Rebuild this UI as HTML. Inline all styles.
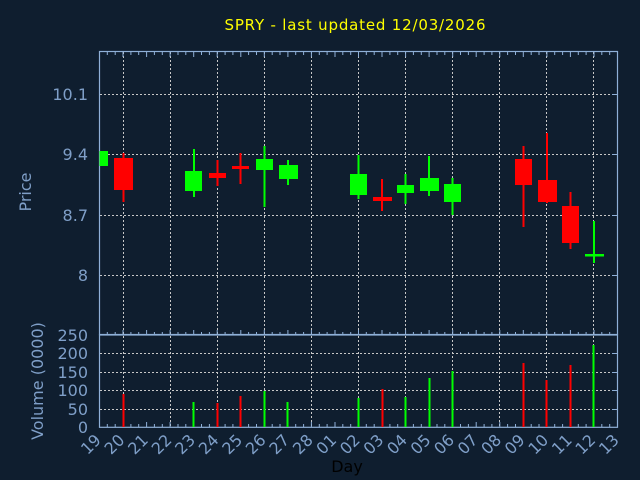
<!DOCTYPE html>
<html><head><meta charset="utf-8"><style>
html,body{margin:0;padding:0;background:#0f1e2f;}
svg{display:block;}
text{font-family:"DejaVu Sans","Liberation Sans",sans-serif;}
</style></head><body>
<svg id="s" width="640" height="480" viewBox="0 0 640 480" xmlns="http://www.w3.org/2000/svg">
<rect width="640" height="480" fill="#0f1e2f"/>
<text x="355" y="30" fill="#ffff00" font-size="15" text-anchor="middle" textLength="261">SPRY - last updated 12/03/2026</text>
<g stroke="#c8c8c8" stroke-width="1" stroke-dasharray="2,2" fill="none">
<path d="M100 94.5H617M100 154.5H617M100 215.5H617M100 275.5H617"/>
<path d="M100 353.5H617M100 372.5H617M100 390.5H617M100 409.5H617"/>
<path d="M123.5 52V427M170.5 52V427M217.5 52V427M264.5 52V427M311.5 52V427M358.5 52V427M405.5 52V427M452.5 52V427M499.5 52V427M546.5 52V427M593.5 52V427"/>
</g>
<g id="ticks" stroke="#8fb0d8" stroke-width="1"></g>
<g fill="none" stroke="#8fb0d8" stroke-width="1.2">
<rect x="99.5" y="51.5" width="518" height="283"/>
<rect x="99.5" y="335" width="518" height="92.3"/>
</g>
<g fill="#7f9fc8" font-size="16" text-anchor="end">
<text x="88" y="100">10.1</text>
<text x="88" y="160">9.4</text>
<text x="88" y="221">8.7</text>
<text x="88" y="281">8</text>
<text x="88" y="341">250</text>
<text x="88" y="359">200</text>
<text x="88" y="378">150</text>
<text x="88" y="396">100</text>
<text x="88" y="415">50</text>
<text x="88" y="433">0</text>
</g>
<text transform="translate(31,192) rotate(-90)" fill="#7f9fc8" font-size="16" text-anchor="middle">Price</text>
<text transform="translate(43,381) rotate(-90)" fill="#7f9fc8" font-size="16" text-anchor="middle">Volume (0000)</text>
<text x="347" y="472" fill="#000" font-size="16" text-anchor="middle">Day</text>
<g id="xl" fill="#7f9fc8" font-size="16" text-anchor="end"></g>
<!-- candles -->
<g stroke-width="2" shape-rendering="crispEdges">
<rect x="99.5" y="151" width="8.5" height="15" fill="#00ff00"/>
<line x1="123.5" y1="153" x2="123.5" y2="202" stroke="#ff0000"/><rect x="114" y="158" width="19" height="32" fill="#ff0000"/>
<line x1="193.8" y1="149" x2="193.8" y2="197" stroke="#00ff00"/><rect x="185" y="171" width="17" height="20" fill="#00ff00"/>
<line x1="217.5" y1="160" x2="217.5" y2="186" stroke="#ff0000"/><rect x="209" y="173" width="17" height="5" fill="#ff0000"/>
<line x1="240.7" y1="153" x2="240.7" y2="184" stroke="#ff0000"/><rect x="232" y="166" width="17" height="3" fill="#ff0000"/>
<line x1="264.5" y1="146" x2="264.5" y2="207" stroke="#00ff00"/><rect x="256" y="159" width="17" height="11" fill="#00ff00"/>
<line x1="288" y1="160" x2="288" y2="185" stroke="#00ff00"/><rect x="279" y="165" width="19" height="14" fill="#00ff00"/>
<line x1="358.5" y1="155" x2="358.5" y2="199" stroke="#00ff00"/><rect x="350" y="174" width="17" height="21" fill="#00ff00"/>
<line x1="382" y1="179" x2="382" y2="211" stroke="#ff0000"/><rect x="373" y="197" width="19" height="4" fill="#ff0000"/>
<line x1="405.5" y1="174" x2="405.5" y2="204" stroke="#00ff00"/><rect x="397" y="185" width="17" height="8" fill="#00ff00"/>
<line x1="429" y1="156" x2="429" y2="196" stroke="#00ff00"/><rect x="420" y="178" width="19" height="13" fill="#00ff00"/>
<line x1="452.5" y1="178" x2="452.5" y2="215" stroke="#00ff00"/><rect x="444" y="184" width="17" height="18" fill="#00ff00"/>
<line x1="523.3" y1="146" x2="523.3" y2="227" stroke="#ff0000"/><rect x="515" y="159" width="17" height="26" fill="#ff0000"/>
<line x1="547" y1="133" x2="547" y2="203" stroke="#ff0000"/><rect x="538" y="180" width="19" height="22" fill="#ff0000"/>
<line x1="570.5" y1="192" x2="570.5" y2="249" stroke="#ff0000"/><rect x="562" y="206" width="17" height="37" fill="#ff0000"/>
<line x1="594" y1="221" x2="594" y2="263" stroke="#00ff00"/><rect x="585" y="254" width="19" height="2.5" fill="#00ff00"/>
</g>
<!-- volume -->
<g stroke-width="2" shape-rendering="crispEdges">
<line x1="123.5" y1="394" x2="123.5" y2="427" stroke="#ff0000"/>
<line x1="193.5" y1="402" x2="193.5" y2="427" stroke="#00ff00"/>
<line x1="217.5" y1="403" x2="217.5" y2="427" stroke="#ff0000"/>
<line x1="240.5" y1="396" x2="240.5" y2="427" stroke="#ff0000"/>
<line x1="264.5" y1="391" x2="264.5" y2="427" stroke="#00ff00"/>
<line x1="287.5" y1="402" x2="287.5" y2="427" stroke="#00ff00"/>
<line x1="358.5" y1="398" x2="358.5" y2="427" stroke="#00ff00"/>
<line x1="382.5" y1="389" x2="382.5" y2="427" stroke="#ff0000"/>
<line x1="405.5" y1="397" x2="405.5" y2="427" stroke="#00ff00"/>
<line x1="429.5" y1="378" x2="429.5" y2="427" stroke="#00ff00"/>
<line x1="452.5" y1="371" x2="452.5" y2="427" stroke="#00ff00"/>
<line x1="523.5" y1="363" x2="523.5" y2="427" stroke="#ff0000"/>
<line x1="546.5" y1="380" x2="546.5" y2="427" stroke="#ff0000"/>
<line x1="570.5" y1="365" x2="570.5" y2="427" stroke="#ff0000"/>
<line x1="593.5" y1="345" x2="593.5" y2="427" stroke="#00ff00"/>
</g>
</svg>
<script>
(function(){
var ns="http://www.w3.org/2000/svg";
var labels=["19","20","21","22","23","24","25","26","27","28","01","02","03","04","05","06","07","08","09","10","11","12","13"];
var d=518/22, g=document.getElementById("xl"), t=document.getElementById("ticks"), p="";
for(var i=0;i<23;i++){
 var x=99.5+i*d;
 var e=document.createElementNS(ns,"text");
 e.setAttribute("transform","translate("+(x+2.5)+",441) rotate(-45)");
 e.textContent=labels[i]; g.appendChild(e);
}
for(var j=0;j<=66;j++){
 var x2=(99.5+j*d/3).toFixed(1), L=(j%3==0)?5:3;
 p+="M"+x2+" 52v"+L+"M"+x2+" 335v-"+L+"M"+x2+" 427v-"+L;
}
var pa=document.createElementNS(ns,"path");pa.setAttribute("d",p);t.appendChild(pa);
var q="";[94.5,154.5,215.5,275.5,353.5,372.5,390.5,409.5].forEach(function(y){q+="M617 "+y+"h-5";});
var pb=document.createElementNS(ns,"path");pb.setAttribute("d",q);t.appendChild(pb);
})();
</script>
</body></html>
